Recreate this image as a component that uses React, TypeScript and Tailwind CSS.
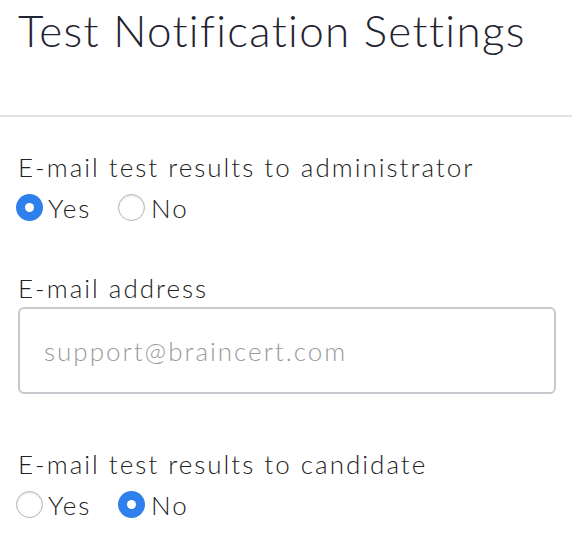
function Radio({ checked }: { checked: boolean }) {
  return checked ? (
    <span className="flex h-[27px] w-[27px] items-center justify-center rounded-full bg-[#2f80ed]">
      <span className="h-[9px] w-[9px] rounded-full bg-white" />
    </span>
  ) : (
    <span className="h-[27px] w-[27px] rounded-full border-[1.5px] border-[#b3b3b3] bg-white shadow-[inset_0_1px_2px_rgba(0,0,0,0.12)]" />
  );
}

function YesNo({ value }: { value: "yes" | "no" }) {
  return (
    <div className="flex items-center h-[41px]">
      <label className="flex w-[102px] items-center gap-[5px]">
        <Radio checked={value === "yes"} />
        <span>Yes</span>
      </label>
      <label className="flex items-center gap-[6px]">
        <Radio checked={value === "no"} />
        <span>No</span>
      </label>
    </div>
  );
}

export default function App() {
  return (
    <div className="w-[572px] h-[544px] overflow-hidden bg-white text-[#222222] font-['Lato','Liberation_Sans',sans-serif]">
      <h1 className="px-[18px] pt-[2px] text-[44px] font-light leading-[56px] tracking-[1.3px] text-[#1f2430]">
        Test Notification Settings
      </h1>
      <hr className="mt-[57px] border-0 border-t-2 border-[#e2e2e2]" />

      <div className="px-[16px] pt-[30px] text-[26px] font-light leading-[40px] tracking-[2px]">
        <div className="pl-[2px]">E-mail test results to administrator</div>
        <YesNo value="yes" />

        <div className="mt-[40px] pl-[2px]">E-mail address</div>
        <input
          type="text"
          placeholder="support@braincert.com"
          className="-mt-[1px] ml-[2px] h-[87px] w-[538px] rounded-[6px] border-2 border-[#c5c9ce] px-[24px] text-[26px] font-light tracking-[2px] outline-none placeholder:text-[#9a9a9a]"
        />

        <div className="mt-[50px] pl-[2px]">E-mail test results to candidate</div>
        <YesNo value="no" />
      </div>
    </div>
  );
}
